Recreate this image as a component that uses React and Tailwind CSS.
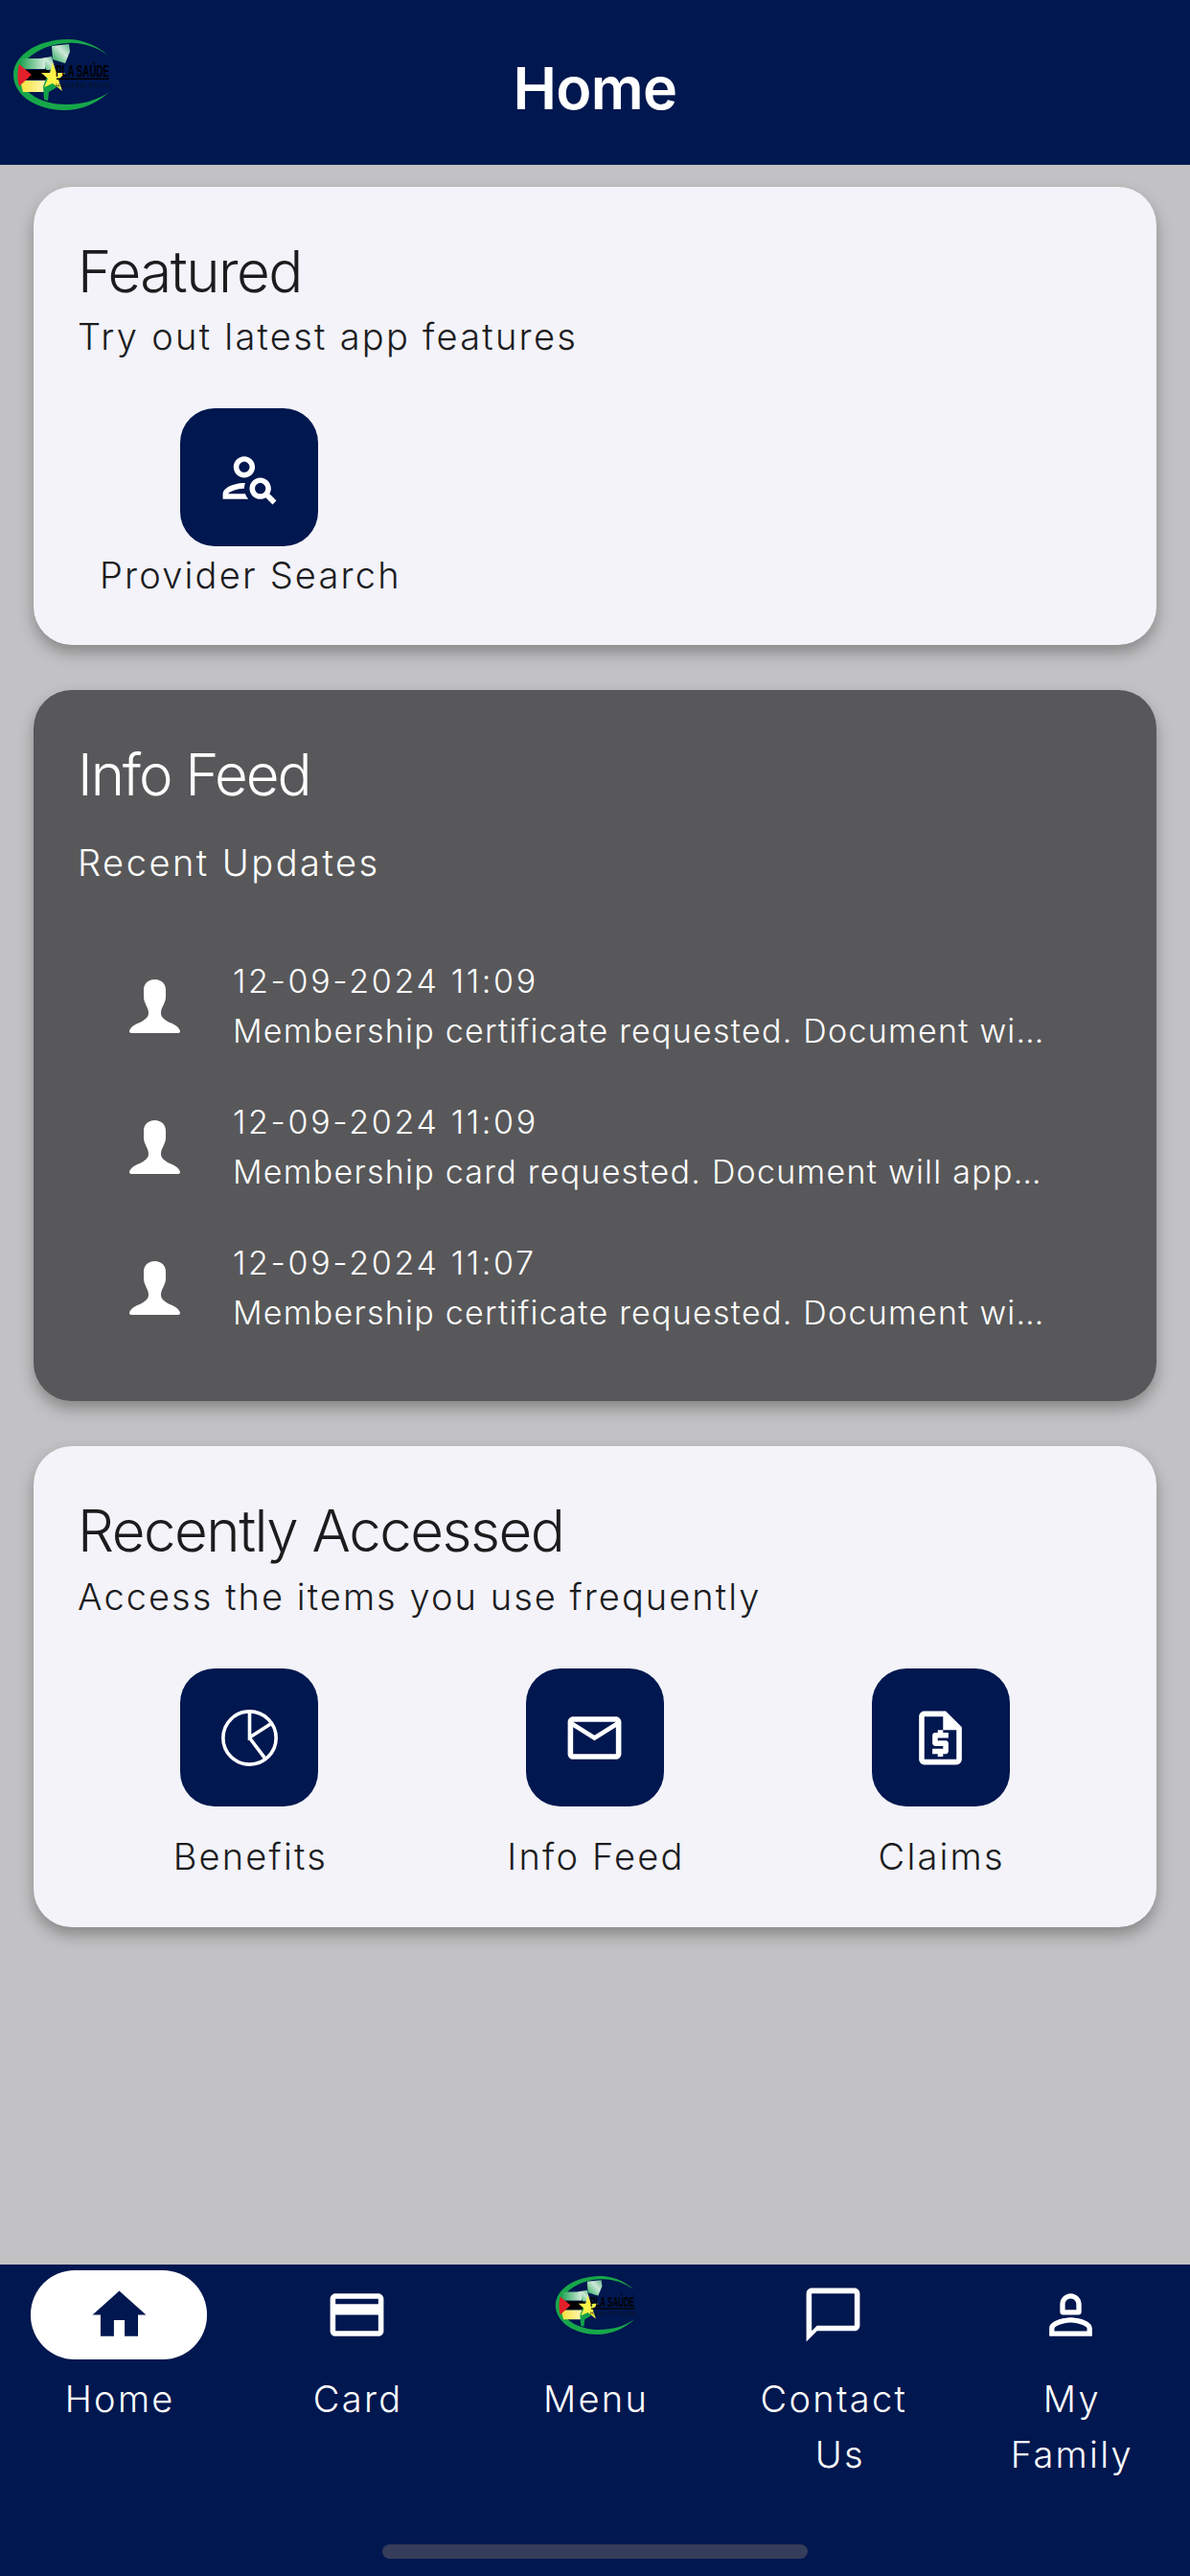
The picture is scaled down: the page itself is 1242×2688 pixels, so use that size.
import React from 'react';

// Brand mark: ringed flag, country outline, star and wordmark
const Logo = ({ className }) => (
  <svg viewBox="0 0 102 76" className={className}>
    <defs>
      <linearGradient id="mapFade" x1="0" y1="1" x2="1" y2="0">
        <stop offset="0" stopColor="#1aa84f" />
        <stop offset="0.6" stopColor="#cfe8d8" />
        <stop offset="1" stopColor="#5fb585" />
      </linearGradient>
      <linearGradient id="bandFade" x1="0" y1="0" x2="1" y2="0">
        <stop offset="0" stopColor="#1aa050" />
        <stop offset="1" stopColor="#d6ecdc" />
      </linearGradient>
      <linearGradient id="yellowFade" x1="0" y1="0" x2="1" y2="0">
        <stop offset="0" stopColor="#f7e23a" />
        <stop offset="1" stopColor="#fff9b8" />
      </linearGradient>
    </defs>
    <path
      d="M100 18 C88 7 72 1 58 1 C26 1 1 18 1 38 C1 60 26 75 54 75 C72 75 88 68 101 56 C88 65 72 69 56 69 C30 69 8 56 8 38 C8 22 30 6 58 5 C72 4 88 9 100 18Z"
      fill="#17a74a"
    />
    <path d="M41 8 L59 6 L60 14 L55 26 L42 22Z" fill="url(#mapFade)" />
    <path d="M29 21 L41 19 L44 31 L36 34Z" fill="url(#mapFade)" />
    <path d="M8 21 H34 V32 H8Z" fill="url(#bandFade)" />
    <path d="M8 33 H38 V43 H8Z" fill="#000" />
    <path d="M8 44 H36 V56 H11Z" fill="url(#yellowFade)" />
    <path d="M7 27 L20 38 L7 50 C5 44 5 33 7 27Z" fill="#e2202c" />
    <path d="M36 40 L46 38 L48 50 L38 56 L37 65 L33 64 L32 50Z" fill="#12a04a" />
    <path
      d="M42 25 L46 36 L55 36 L48 43 L52 55 L42 47 L33 51 L37 42 L30 36 L39 36Z"
      fill="#fbf24a"
    />
    <text x="45" y="40" fontFamily="Liberation Sans, sans-serif" fontSize="17" fontWeight="700" fill="#000" textLength="56" lengthAdjust="spacingAndGlyphs">
      PLA SAÚDE
    </text>
    <rect x="46" y="41.5" width="55" height="1.5" fill="#000" />
    <text x="45" y="51" fontFamily="Liberation Sans, sans-serif" fontSize="6" fill="#111" textLength="56">
      HEALTH PLAN
    </text>
  </svg>
);

const MaterialIcon = ({ d, className }) => (
  <svg viewBox="0 0 24 24" fill="currentColor" fillRule="evenodd" className={className}>
    <path d={d} />
  </svg>
);

const PersonSearchPath = 'M10 12c2.21 0 4-1.79 4-4s-1.79-4-4-4-4 1.79-4 4 1.79 4 4 4zm0-6c1.1 0 2 .9 2 2s-.9 2-2 2-2-.9-2-2 .9-2 2-2zM4 18c.22-.72 3.31-2 6-2 0-.7.13-1.37.35-1.99C7.62 13.91 2 15.27 2 18v2h9.54c-.52-.58-.93-1.25-1.19-2H4zm15.43.02c.36-.59.57-1.28.57-2.02 0-2.21-1.79-4-4-4s-4 1.79-4 4 1.79 4 4 4c.74 0 1.43-.22 2.02-.57L20.59 22 22 20.59c-1.5-1.5-.79-.8-2.57-2.57zM16 18c-1.1 0-2-.9-2-2s.9-2 2-2 2 .9 2 2-.9 2-2 2z';
const MailPath = 'M20 4H4c-1.1 0-1.99.9-1.99 2L2 18c0 1.1.9 2 2 2h16c1.1 0 2-.9 2-2V6c0-1.1-.9-2-2-2zm0 14H4V8l8 5 8-5v10zm-8-7L4 6h16l-8 5z';
const ClaimPath = 'M14 2H6c-1.1 0-2 .9-2 2v16c0 1.1.9 2 2 2h12c1.1 0 2-.9 2-2V8l-6-6zM6 4h7v5h5v11H6V4zM11 19h2v-1h1c.55 0 1-.45 1-1v-3c0-.55-.45-1-1-1h-3v-1h4v-2h-2V9h-2v1h-1c-.55 0-1 .45-1 1v3c0 .55.45 1 1 1h3v1H9v2h2v1z';
const HomePath = 'M10 20v-6h4v6h5v-8h3L12 3 2 12h3v8z';
const CardPath = 'M20 4H4c-1.11 0-1.99.89-1.99 2L2 18c0 1.11.89 2 2 2h16c1.11 0 2-.89 2-2V6c0-1.11-.89-2-2-2zm0 14H4v-6h16v6zm0-10H4V6h16v2z';
const ChatPath = 'M20 2H4c-1.1 0-2 .9-2 2v18l4-4h14c1.1 0 2-.9 2-2V4c0-1.1-.9-2-2-2zm0 14H6l-2 2V4h16v12z';
// Head is an arch with a flat base, shoulders are a closed dome
const FamilyPath = 'M12 4C9.8 4 8 5.8 8 8V11C8 11.5 8.5 12 9 12H15C15.5 12 16 11.5 16 11V8C16 5.8 14.2 4 12 4ZM12 5.9C13.2 5.9 14.1 6.9 14.1 8V10.1H9.9V8C9.9 6.9 10.8 5.9 12 5.9ZM12 13C9.3 13 4 14.3 4 17V20H20V17C20 14.3 14.7 13 12 13ZM12 14.9C15 14.9 18.1 16.4 18.1 17V18.1H5.9V17C5.9 16.4 9 14.9 12 14.9Z';

const PieIcon = ({ className }) => (
  <svg viewBox="0 0 24 24" fill="none" stroke="currentColor" strokeWidth="1.3" className={className}>
    <circle cx="12" cy="12" r="9.9" />
    <path d="M12 2v9.8l7.8-5M12 12l5.6 7.4" />
  </svg>
);

const Silhouette = () => (
  <svg viewBox="0 0 53 56" className="w-[53px] h-[56px] shrink-0" fill="#fff">
    <path d="M26.5 0C34 0 38 5 38 11V18C38 25 33 29 33 35C33 40 37 42 42 45C48 47 52 50 53 54Q53 56 51 56H2Q0 56 0 54C1 50 5 47 11 45C16 42 20 40 20 35C20 29 15 25 15 18V11C15 5 19 0 26.5 0Z" />
  </svg>
);

const Tile = ({ icon, label, labelClass }) => (
  <div className="flex flex-col items-center">
    <div className="w-[144px] h-[144px] rounded-[36px] bg-[#00174f] flex items-center justify-center text-white">
      {icon}
    </div>
    <span className={`pl-[2px] text-[38px] leading-[52px] font-light tracking-[0.058em] text-[#1c1c1e] whitespace-nowrap ${labelClass}`}>
      {label}
    </span>
  </div>
);

const feed = [
  { date: '12-09-2024 11:09', text: 'Membership certificate requested. Document will be available shortly' },
  { date: '12-09-2024 11:09', text: 'Membership card requested. Document will appear shortly in your documents' },
  { date: '12-09-2024 11:07', text: 'Membership certificate requested. Document will be available shortly' },
];

const navItems = [
  { label: 'Home', icon: <MaterialIcon d={HomePath} className="w-[67px] h-[67px] text-[#00174f]" />, active: true },
  { label: 'Card', icon: <MaterialIcon d={CardPath} className="w-[67px] h-[67px]" /> },
  { label: 'Menu', icon: <Logo className="w-[84px] h-[63px] -mt-[20px]" /> },
  { label: 'Contact\n\u00a0Us', icon: <MaterialIcon d={ChatPath} className="w-[67px] h-[67px]" /> },
  { label: 'My\nFamily', icon: <MaterialIcon d={FamilyPath} className="w-[67px] h-[67px]" /> },
];

const App = () => {
  return (
    <div className="w-[1242px] h-[2688px] flex flex-col bg-[#c2c2c4] font-['Inter',sans-serif] overflow-hidden">
      {/* Header */}
      <header className="relative h-[172px] shrink-0 bg-[#00174f] flex items-center justify-center pt-[14px]">
        <Logo className="absolute left-[13px] top-[40px] w-[102px] h-[76px]" />
        <h1 className="text-[61px] font-semibold text-white tracking-[-0.01em]">Home</h1>
      </header>

      <main className="flex-1 px-[35px] pt-[23px] flex flex-col gap-[47px]">
        {/* Featured */}
        <section className="rounded-[40px] bg-[#f3f3f9] shadow-[0_8px_16px_rgba(0,0,0,0.3)] px-[47px] pt-[52px] pb-[47px]">
          <h2 className="-ml-[1px] text-[60px] leading-[72px] font-light tracking-[-0.025em] text-[#1c1c1e]">Featured</h2>
          <p className="-ml-[1px] mt-[6px] text-[38px] leading-[52px] font-light tracking-[0.06em] text-[#1c1c1e]">Try out latest app features</p>
          <div className="mt-[49px] grid grid-cols-3 -mx-[2px]">
            <Tile icon={<MaterialIcon d={PersonSearchPath} className="w-[67px] h-[67px]" />} label="Provider Search" labelClass="mt-[4px]" />
          </div>
        </section>

        {/* Info Feed */}
        <section className="rounded-[40px] bg-[#58585a] shadow-[0_8px_16px_rgba(0,0,0,0.3)] pt-[52px] pb-[66px]">
          <h2 className="px-[46px] text-[60px] leading-[72px] font-light tracking-[-0.035em] text-white">Info Feed</h2>
          <p className="px-[46px] mt-[30px] text-[38px] leading-[52px] font-light tracking-[0.066em] text-white">Recent Updates</p>
          <ul className="mt-[72px] flex flex-col gap-[43px] pl-[100px] pr-[111px]">
            {feed.map((item, i) => (
              <li key={i} className="flex items-center gap-[55px]">
                <Silhouette />
                <div className="min-w-0 flex-1 text-white">
                  <div className="text-[34px] leading-[52px] font-light tracking-[0.078em]">{item.date}</div>
                  <div className="text-[34px] leading-[52px] font-light tracking-[0.037em] truncate">{item.text}</div>
                </div>
              </li>
            ))}
          </ul>
        </section>

        {/* Recently Accessed */}
        <section className="rounded-[40px] bg-[#f3f3f9] shadow-[0_8px_16px_rgba(0,0,0,0.3)] px-[47px] pt-[52px] pb-[48px]">
          <h2 className="-ml-[1px] text-[60px] leading-[72px] font-light tracking-[-0.025em] text-[#1c1c1e]">Recently Accessed</h2>
          <p className="-ml-[1px] mt-[7px] text-[38px] leading-[52px] font-light tracking-[0.054em] text-[#1c1c1e]">Access the items you use frequently</p>
          <div className="mt-[49px] grid grid-cols-3 -mx-[2px]">
            <Tile icon={<PieIcon className="w-[67px] h-[67px]" />} label="Benefits" labelClass="mt-[26px]" />
            <Tile icon={<MaterialIcon d={MailPath} className="w-[67px] h-[67px]" />} label="Info Feed" labelClass="mt-[26px]" />
            <Tile icon={<MaterialIcon d={ClaimPath} className="w-[67px] h-[67px]" />} label="Claims" labelClass="mt-[26px]" />
          </div>
        </section>
      </main>

      {/* Bottom navigation */}
      <nav className="relative h-[325px] shrink-0 bg-[#00174f] grid grid-cols-5 pt-[6px] text-white">
        {navItems.map((item) => (
          <div key={item.label} className="flex flex-col items-center">
            <div className={`w-[184px] h-[93px] rounded-[46px] flex items-center justify-center ${item.active ? 'bg-white' : ''}`}>
              {item.icon}
            </div>
            <span className="mt-[12px] pl-[2px] text-center text-[38px] leading-[58px] font-light tracking-[0.06em] whitespace-pre-line">
              {item.label}
            </span>
          </div>
        ))}
        <div className="absolute left-[399px] top-[292px] w-[444px] h-[15px] rounded-full bg-[#353d5a]" />
      </nav>
    </div>
  );
};

export default App;
